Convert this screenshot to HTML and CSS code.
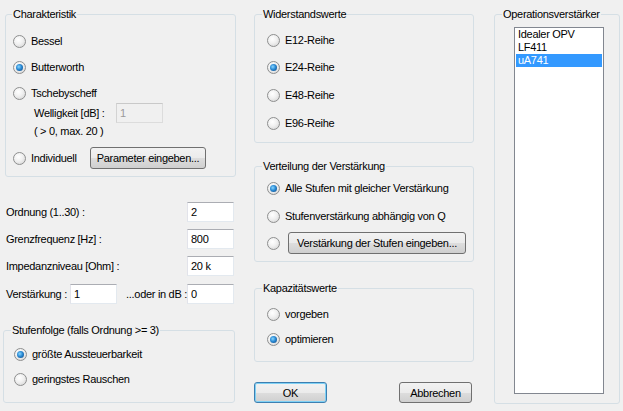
FILE: index.html
```html
<!DOCTYPE html>
<html lang="de">
<head>
  <meta charset="UTF-8">
  <title>Filterentwurf</title>
  <meta name="viewport" content="width=device-width, initial-scale=1.0">
  <link rel="stylesheet" href="styles.css">
</head>
<body>
  <div class="dialog">

    <div class="col col-left">
      <fieldset class="group group-char">
        <legend>Charakteristik</legend>
        <label class="opt opt-first"><input type="radio" name="char"> Bessel</label>
        <label class="opt"><input type="radio" name="char" checked> Butterworth</label>
        <label class="opt"><input type="radio" name="char"> Tschebyscheff</label>
        <div class="sub-row">
          <span class="sub-label">Welligkeit [dB] :</span>
          <input type="text" class="field" value="1" disabled>
        </div>
        <div class="sub-note">( &gt; 0, max. 20 )</div>
        <div class="opt-row">
          <label class="opt opt-inline"><input type="radio" name="char"> Individuell</label>
          <button class="btn btn-param">Parameter eingeben...</button>
        </div>
      </fieldset>

      <div class="params">
        <div class="param">
          <span>Ordnung (1..30) :</span>
          <input type="text" class="field" value="2">
        </div>
        <div class="param">
          <span>Grenzfrequenz [Hz] :</span>
          <input type="text" class="field" value="800">
        </div>
        <div class="param">
          <span>Impedanzniveau [Ohm] :</span>
          <input type="text" class="field" value="20 k">
        </div>
        <div class="param param-gain">
          <span class="gain-label">Verstärkung :</span>
          <input type="text" class="field" value="1">
          <span class="db-label">...oder in dB :</span>
          <input type="text" class="field" value="0">
        </div>
      </div>

      <fieldset class="group group-stufen">
        <legend>Stufenfolge (falls Ordnung &gt;= 3)</legend>
        <label class="opt opt-first"><input type="radio" name="folge" checked> größte Aussteuerbarkeit</label>
        <label class="opt opt-tight"><input type="radio" name="folge"> geringstes Rauschen</label>
      </fieldset>
    </div>

    <div class="col col-mid">
      <fieldset class="group group-reihe">
        <legend>Widerstandswerte</legend>
        <label class="opt opt-first"><input type="radio" name="reihe"> E12-Reihe</label>
        <label class="opt opt-second"><input type="radio" name="reihe" checked> E24-Reihe</label>
        <label class="opt"><input type="radio" name="reihe"> E48-Reihe</label>
        <label class="opt"><input type="radio" name="reihe"> E96-Reihe</label>
      </fieldset>

      <fieldset class="group group-vert">
        <legend>Verteilung der Verstärkung</legend>
        <label class="opt opt-first"><input type="radio" name="vert" checked> Alle Stufen mit gleicher Verstärkung</label>
        <label class="opt"><input type="radio" name="vert"> Stufenverstärkung abhängig von Q</label>
        <div class="opt-row">
          <label class="opt opt-inline"><input type="radio" name="vert"></label>
          <button class="btn btn-stufen">Verstärkung der Stufen eingeben...</button>
        </div>
      </fieldset>

      <fieldset class="group group-kap">
        <legend>Kapazitätswerte</legend>
        <label class="opt opt-first"><input type="radio" name="kap"> vorgeben</label>
        <label class="opt opt-tight"><input type="radio" name="kap" checked> optimieren</label>
      </fieldset>

      <div class="actions">
        <button class="btn btn-default">OK</button>
        <button class="btn">Abbrechen</button>
      </div>
    </div>

    <div class="col col-right">
      <fieldset class="group group-opv">
        <legend>Operationsverstärker</legend>
        <ul class="listbox">
          <li>Idealer OPV</li>
          <li>LF411</li>
          <li class="selected">uA741</li>
        </ul>
      </fieldset>
    </div>

  </div>
</body>
</html>
```

FILE: styles.css
```css
body { margin: 0; background: #f0f0f0; font-family: "Liberation Sans", Arial, sans-serif; font-size: 11px; letter-spacing: -0.3px; color: #000; }
.dialog { display: flex; align-items: flex-start; width: 623px; height: 411px; }
.col { display: flex; flex-direction: column; }
.col-left { margin-left: 3px; width: 234px; }
.col-mid { margin-left: 17px; width: 220px; }
.col-right { margin-left: 20px; width: 126px; }

/* group boxes */
.group { margin: 8px 0 0 0; padding: 0; border: 1px solid #d5dfe5; border-radius: 3px; min-width: 0; }
.group legend { margin-left: 6px; padding: 0 1px; line-height: 13px; }
.group-char { margin-left: 2px; margin-right: 1px; padding-bottom: 7px; }
.group-stufen { margin-top: 20px; margin-right: 2px; padding-bottom: 13px; }
.group-stufen legend { margin-left: 7px; }
.group-reihe { padding-bottom: 9px; }
.group-reihe legend, .group-vert legend, .group-kap legend, .group-opv legend { margin-left: 7px; }
.group-vert { margin-top: 17px; padding-bottom: 7px; }
.group-kap { margin-top: 20px; padding-bottom: 12px; }
.group-opv { padding-bottom: 9px; }

/* radio options */
.opt { display: flex; align-items: center; gap: 5px; height: 20px; padding-left: 7px; margin-top: 6px; white-space: nowrap; }
.opt-first { margin-top: 10px; }
.opt-tight { margin-top: 5px; }
.group-stufen .opt { padding-left: 10px; }
.group-stufen .opt-first { margin-top: 7px; }
.col-mid .opt { padding-left: 12px; }
.group-reihe .opt { margin-top: 8px; }
.group-reihe .opt-first { margin-top: 9px; }
.group-reihe .opt-second { margin-top: 7px; }
.group-vert .opt { margin-top: 8px; }
.group-vert .opt-first { margin-top: 5px; }
.group-kap .opt-first { margin-top: 9px; }
.group-kap .opt-tight { margin-top: 5px; }

input[type="radio"] {
  appearance: none; margin: 0; width: 13px; height: 13px; flex: none;
  border: 1px solid #8e8f8f; border-radius: 50%; box-sizing: border-box;
  background: radial-gradient(circle at 40% 35%, #ffffff 0%, #f0f0f0 45%, #cfcfcf 100%);
  position: relative;
}
input[type="radio"]:checked::after {
  content: ""; position: absolute; left: 2px; top: 2px; width: 7px; height: 7px; border-radius: 50%;
  background: radial-gradient(circle at 40% 40%, #8ad7ff 0%, #2a8ad4 45%, #0b3f78 100%);
}

.sub-row { display: flex; align-items: center; height: 20px; padding-left: 28px; }
.sub-label { width: 82px; white-space: nowrap; }
.sub-note { height: 14px; line-height: 14px; padding-left: 28px; margin-top: 1px; }
.opt-row { display: flex; align-items: center; margin-top: 9px; }
.opt-row .opt { margin-top: 0; }
.opt-inline { width: 76px; }
.col-mid .opt-inline { width: auto; padding-right: 8px; }
.group-vert .opt-row { margin-top: 6px; }

/* text fields */
.field {
  width: 47px; height: 20px; box-sizing: border-box; padding: 0 3px; margin: 0; flex: none;
  border: 1px solid #e3e9ef; border-top-color: #abadb3; border-left-color: #e2e3ea;
  background: #fff; font: inherit; letter-spacing: inherit; color: #000;
}
.field:disabled { background: #f0f0f0; border-color: #c9c9c9 #dcdcdc #dcdcdc #d3d3d3; color: #9a9a9a; }

.params { margin-top: 25px; padding: 0 3px; }
.param { display: flex; align-items: center; justify-content: space-between; height: 20px; margin-top: 7px; white-space: nowrap; }
.param:first-child { margin-top: 0; }
.param-gain { margin-top: 8px; justify-content: flex-start; }
.gain-label { width: 65px; }
.db-label { margin-left: 9px; }
.param-gain .field:last-child { margin-left: auto; }

/* buttons */
.btn {
  height: 22px; padding: 0; margin: 0; border: 1px solid #707070; border-radius: 3px; white-space: nowrap;
  background: linear-gradient(#f2f2f2 0%, #ebebeb 50%, #dddddd 51%, #cfcfcf 100%);
  font: inherit; letter-spacing: inherit; color: #000; cursor: pointer;
}
.btn-param { width: 116px; margin-left: 1px; }
.btn-stufen { width: 178px; }
.actions { display: flex; justify-content: space-between; margin-top: 20px; padding-right: 2px; }
.actions .btn { width: 73px; height: 21px; }
.btn-default { border-color: #3c7fb1; box-shadow: inset 0 0 0 1px #7fd1f5; }

/* listbox */
.listbox { list-style: none; margin: 6px 0 0 19px; padding: 0; width: 90px; height: 367px; box-sizing: border-box; border: 1px solid #828790; background: #fff; }
.listbox li { height: 13px; line-height: 13px; margin: 0 1px; padding-left: 2px; }
.listbox li.selected { background: #3399ff; color: #fff; }
```
